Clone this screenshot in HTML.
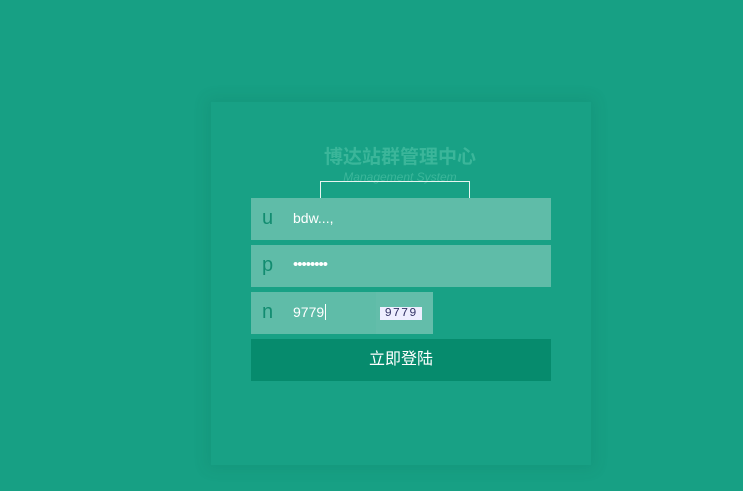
<!DOCTYPE html>
<html><head><meta charset="utf-8"><style>
*{margin:0;padding:0;box-sizing:border-box}
body{width:743px;height:491px;background:#17a084;position:relative;overflow:hidden;font-family:"Liberation Sans","Noto Sans CJK SC",sans-serif}
.panel{position:absolute;left:211px;top:102px;width:380px;height:363px;background:#18a185;box-shadow:0 0 14px 4px rgba(0,80,60,0.10)}
.title{position:absolute;top:142px;left:250px;width:300px;text-align:center;font-size:19px;font-weight:bold;color:#3bb69a}
.sub{position:absolute;top:170px;left:250px;width:300px;text-align:center;font-size:12px;font-style:italic;color:#3bb69a}
.box{position:absolute;left:320px;top:181px;width:150px;height:19px;border:1px solid #e8f5f1;border-bottom:none}
.row{position:absolute;left:251px;width:300px;height:42px;background:#5fbca8}
.row .l{position:absolute;left:11px;top:9px;font-size:20px;color:#128c70}
.row .v{position:absolute;left:42px;top:12px;font-size:14px;color:#fff}
.btn{position:absolute;left:251px;top:339px;width:300px;height:42px;background:#068b6d;color:#fff;font-size:16px;text-align:center;line-height:42px}
.cap{position:absolute;left:376px;top:292px;width:57px;height:42px;background:#63bdaa}
.capt{position:absolute;left:380px;top:307px;width:42px;height:13px;background:#eef;font-size:12px;letter-spacing:1px;color:#336;line-height:13px;text-align:center;font-family:"Liberation Mono",monospace}
</style></head><body>
<div class="panel"></div>
<div class="title">博达站群管理中心</div>
<div class="sub">Management System</div>
<div class="box"></div>
<div class="row" style="top:198px"><span class="l">u</span><span class="v">bdw...,</span></div>
<div class="row" style="top:245px"><span class="l">p</span><span class="v" style="top:11px;font-size:15px;letter-spacing:-1px">••••••••</span></div>
<div class="row" style="top:292px;width:125px"><span class="l">n</span><span class="v">9779<span style="border-left:1px solid #fff;margin-left:1px"></span></span></div>
<div class="cap"></div>
<div class="capt">9779</div>
<div class="btn">立即登陆</div>
</body></html>
